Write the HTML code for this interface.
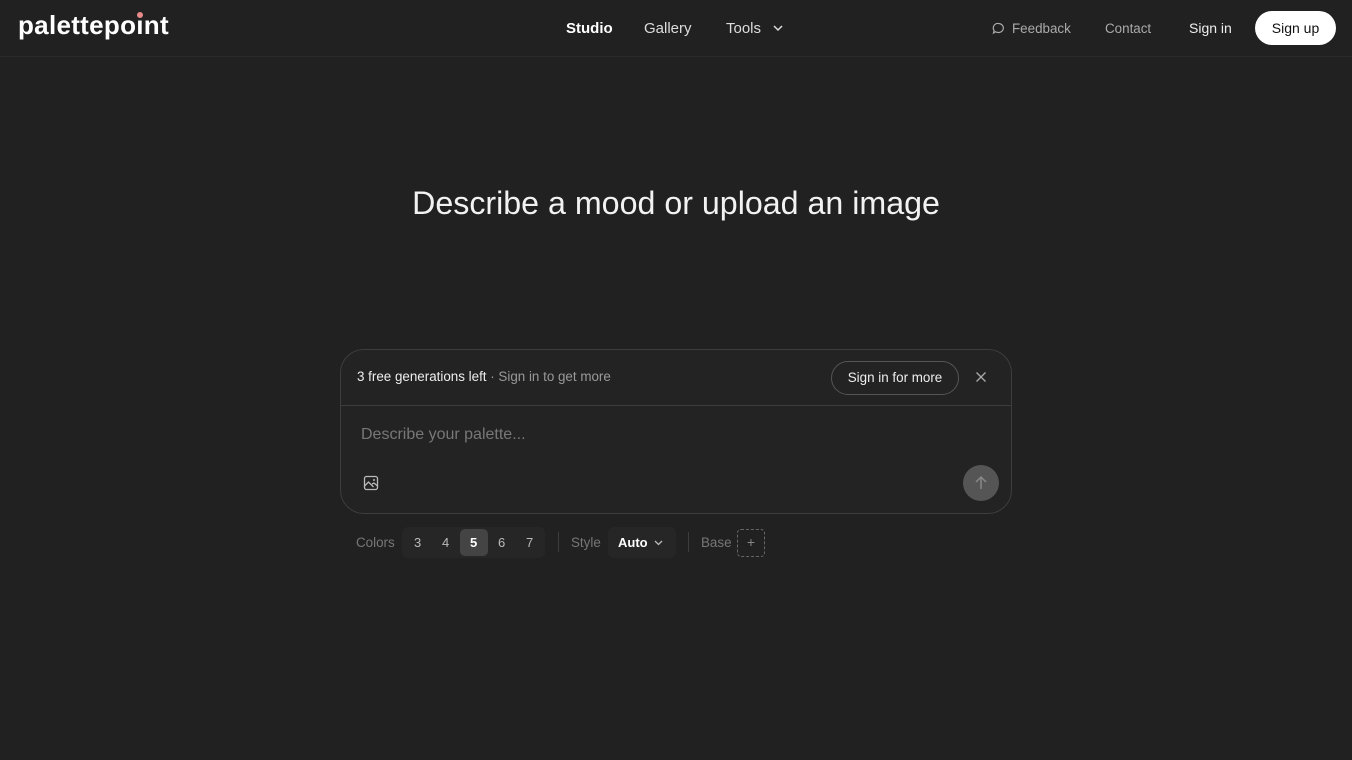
<!DOCTYPE html>
<html><head><meta charset="utf-8"><style>
*{box-sizing:border-box;margin:0;padding:0}
body{width:1352px;height:760px;background:#212121;font-family:"Liberation Sans",sans-serif;color:#fff;position:relative;overflow:hidden}
.a{position:absolute;white-space:nowrap}
.hdr{position:absolute;left:0;top:0;width:1352px;height:57px;border-bottom:1px solid #2a2a2a}
</style></head><body>
<div class="hdr"></div>
<div class="a" style="left:18px;top:10px;font-size:26px;font-weight:bold;letter-spacing:0.3px">palettepo<span style="position:relative">ı</span>nt</div>
<div class="a" style="left:137px;top:12px;width:6px;height:6px;border-radius:50%;background:#e88a8a"></div>
<div class="a" style="left:566px;top:20px;font-size:15px;font-weight:bold">Studio</div>
<div class="a" style="left:644px;top:20px;font-size:15px;color:#ddd">Gallery</div>
<div class="a" style="left:726px;top:20px;font-size:15px;color:#ddd">Tools</div>
<svg class="a" style="left:772px;top:22px" width="12" height="12" viewBox="0 0 12 12"><path d="M2 4l4 4 4-4" stroke="#ddd" stroke-width="1.5" fill="none"/></svg>
<svg class="a" style="left:992px;top:22px" width="13" height="13" viewBox="0 0 13 13"><path d="M6.5 1.5a5 4.5 0 1 1-3 8.2L1.5 11l.6-2.5A4.5 4.5 0 0 1 6.5 1.5z" stroke="#aaa" stroke-width="1.2" fill="none"/></svg>
<div class="a" style="left:1012px;top:21px;font-size:13.4px;color:#aaa">Feedback</div>
<div class="a" style="left:1105px;top:21px;font-size:13.4px;color:#aaa">Contact</div>
<div class="a" style="left:1189px;top:20px;font-size:14px;color:#eee">Sign in</div>
<div class="a" style="left:1255px;top:11px;width:81px;height:34px;border-radius:17px;background:#fff;color:#111;font-size:14px;text-align:center;line-height:34px">Sign up</div>
<div class="a" style="left:0;width:1352px;top:185px;text-align:center;font-size:32.2px;color:#f2f2f2">Describe a mood or upload an image</div>
<div class="a" style="left:340px;top:349px;width:672px;height:165px;border:1px solid #3d3d3d;border-radius:24px;background:#232323"></div>
<div class="a" style="left:341px;top:405px;width:670px;height:1px;background:#3d3d3d"></div>
<div class="a" style="left:357px;top:369px;font-size:13.4px;color:#eee">3 free generations left <span style="color:#999">· Sign in to get more</span></div>
<div class="a" style="left:831px;top:361px;width:128px;height:34px;border:1px solid #555;border-radius:17px;font-size:13.4px;text-align:center;line-height:32px;color:#eee">Sign in for more</div>
<svg class="a" style="left:975px;top:371px" width="12" height="12" viewBox="0 0 12 12"><path d="M1.5 1.5l9 9M10.5 1.5l-9 9" stroke="#aaa" stroke-width="1.3"/></svg>
<div class="a" style="left:361px;top:426px;font-size:16px;color:#777">Describe your palette...</div>
<svg class="a" style="left:363px;top:475px" width="16" height="16" viewBox="0 0 16 16"><rect x="1.5" y="1.5" width="13" height="13" rx="2" stroke="#bbb" stroke-width="1.3" fill="none"/><path d="M1.5 11l4-4 5 5M9 9l2-1 3.5 3" stroke="#bbb" stroke-width="1.3" fill="none"/><circle cx="11" cy="5" r="1" fill="#bbb"/></svg>
<div class="a" style="left:963px;top:465px;width:36px;height:36px;border-radius:50%;background:#555"></div>
<svg class="a" style="left:973px;top:475px" width="16" height="16" viewBox="0 0 16 16"><path d="M8 14V2M3 7l5-5 5 5" stroke="#888" stroke-width="1.5" fill="none"/></svg>
<div class="a" style="left:356px;top:535px;font-size:13.4px;color:#777">Colors</div>
<div class="a" style="left:402px;top:527px;width:143px;height:31px;border-radius:6px;background:#262626"></div>
<div class="a" style="left:460px;top:529px;width:28px;height:27px;border-radius:5px;background:#444"></div>
<div class="a" style="left:414px;top:535px;font-size:13px;color:#bbb">3</div>
<div class="a" style="left:442px;top:535px;font-size:13px;color:#bbb">4</div>
<div class="a" style="left:470px;top:535px;font-size:13px;color:#fff;font-weight:bold">5</div>
<div class="a" style="left:498px;top:535px;font-size:13px;color:#bbb">6</div>
<div class="a" style="left:526px;top:535px;font-size:13px;color:#bbb">7</div>
<div class="a" style="left:558px;top:532px;width:1px;height:20px;background:#3d3d3d"></div>
<div class="a" style="left:571px;top:535px;font-size:13.4px;color:#777">Style</div>
<div class="a" style="left:608px;top:527px;width:68px;height:31px;border-radius:6px;background:#262626"></div>
<div class="a" style="left:618px;top:535px;font-size:13px;font-weight:bold">Auto</div>
<svg class="a" style="left:653px;top:538px" width="11" height="10" viewBox="0 0 11 10"><path d="M2 3l3.5 3.5L9 3" stroke="#bbb" stroke-width="1.3" fill="none"/></svg>
<div class="a" style="left:688px;top:532px;width:1px;height:20px;background:#3d3d3d"></div>
<div class="a" style="left:701px;top:535px;font-size:13.4px;color:#777">Base</div>
<div class="a" style="left:737px;top:529px;width:28px;height:28px;border:1px dashed #666;border-radius:4px;text-align:center;line-height:25px;color:#888;font-size:14px">+</div>
</body></html>
